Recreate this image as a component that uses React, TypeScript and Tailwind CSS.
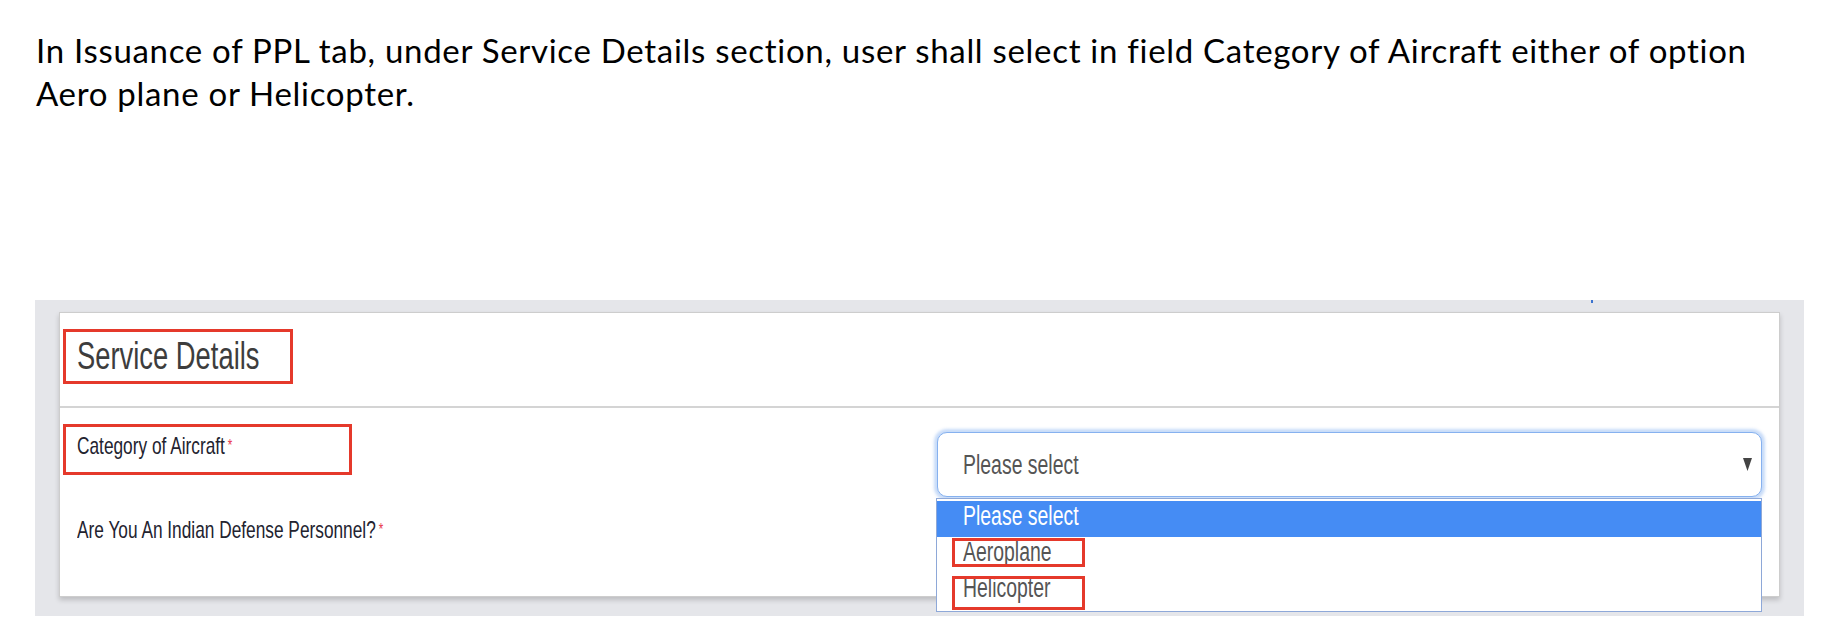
import React from "react";

const Squeeze = ({ children, className = "" }: { children: React.ReactNode; className?: string }) => (
  <span className={"inline-block origin-left scale-x-[0.72] whitespace-nowrap " + className}>{children}</span>
);

export default function App() {
  return (
    <div className="w-[1829px] h-[643px] bg-white overflow-hidden font-['Liberation_Sans',Arial,sans-serif]">
      <div className="h-[300px] pl-[36px] pt-[29px] font-['Lato',sans-serif] text-[33px] leading-[43px] tracking-[0.7px] text-black">
        <div className="whitespace-nowrap">
          In Issuance of PPL tab, under Service Details section, user shall select in field Category of Aircraft either of option
        </div>
        <div className="whitespace-nowrap">Aero plane or Helicopter.</div>
      </div>

      <div className="relative ml-[35px] w-[1769px] h-[316px] bg-[#e5e6ea] pt-[12px] pl-[24px]">
        <div className="absolute left-[1556px] top-0 w-[2px] h-[3px] bg-[#3b73d0]" />
        <div className="w-[1721px] h-[285px] bg-white border border-[#cdcdcd] shadow-[0_3px_5px_rgba(0,0,0,0.18)]">
          <div className="h-[95px] pt-[16px] pl-[3px] border-b-2 border-[#d4d4d4]">
            <div className="w-[230px] h-[55px] border-[3px] border-[#e5392b] pt-[5px] pl-[11px]">
              <Squeeze className="text-[38px] leading-[38px] text-[#3d3d3d]">Service Details</Squeeze>
            </div>
          </div>

          <div className="pt-[16px] pl-[3px]">
            <div className="flex justify-between items-start">
              <div className="w-[289px] h-[51px] border-[3px] border-[#e5392b] pt-[7px] pl-[11px]">
                <Squeeze className="text-[24px] leading-[24px] text-[#23232f]">
                  Category of Aircraft<span className="text-[#e8334a] text-[16px] align-top ml-[4px]">*</span>
                </Squeeze>
              </div>
              <div className="relative mt-[8px] mr-[17px] w-[825px]">
                <div className="h-[65px] rounded-[10px] border-[1.5px] border-[#86b1ef] shadow-[0_0_3px_3px_rgba(130,175,240,0.45)] bg-white flex items-center justify-between pl-[25px] pr-[9px]">
                  <Squeeze className="text-[27px] leading-[27px] text-[#555555] pt-[1px]">Please select</Squeeze>
                  <svg width="9" height="13" viewBox="0 0 9 13" className="mt-[-1px]">
                    <polygon points="0,0 9,0 4.5,13" fill="#444444" />
                  </svg>
                </div>
                <div className="absolute left-[-1px] top-[66px] w-[826px] h-[114px] bg-white border border-[#8ea8d8] pt-[2px] z-10">
                  <div className="h-[36px] bg-[#458cf4] pt-[2px] pl-[26px]">
                    <Squeeze className="text-[27px] leading-[27px] text-white">Please select</Squeeze>
                  </div>
                  <div className="relative h-[36px] pt-[2px] pl-[26px]">
                    <Squeeze className="text-[27px] leading-[27px] text-[#555555]">Aeroplane</Squeeze>
                    <div className="absolute left-[15px] top-[1px] w-[133px] h-[29px] border-[3px] border-[#e5392b]" />
                  </div>
                  <div className="relative h-[36px] pt-[2px] pl-[26px]">
                    <Squeeze className="text-[27px] leading-[27px] text-[#555555]">Helicopter</Squeeze>
                    <div className="absolute left-[15px] top-[3px] w-[133px] h-[34px] border-[3px] border-[#e5392b]" />
                  </div>
                </div>
              </div>
            </div>
            <div className="pl-[14px] mt-[21px]">
              <Squeeze className="text-[24px] leading-[24px] text-[#23232f]">
                Are You An Indian Defense Personnel?<span className="text-[#e8334a] text-[16px] align-top ml-[4px]">*</span>
              </Squeeze>
            </div>
          </div>
        </div>
      </div>
    </div>
  );
}
